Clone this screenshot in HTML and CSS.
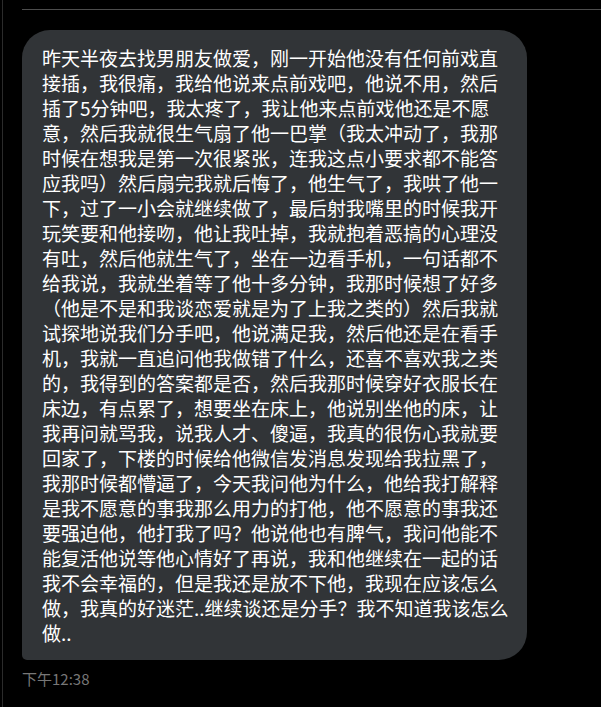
FILE: index.html
```html
<!DOCTYPE html>
<html lang="zh-CN">
<head>
<meta charset="utf-8">
<link rel="stylesheet" href="styles.css">
</head>
<body>
<div class="frame">
  <div class="divider"></div>
  <div class="message">
    <div class="bubble">昨天半夜去找男朋友做爱，刚一开始他没有任何前戏直接插，我很痛，我给他说来点前戏吧，他说不用，然后插了5分钟吧，我太疼了，我让他来点前戏他还是不愿意，然后我就很生气扇了他一巴掌（我太冲动了，我那时候在想我是第一次很紧张，连我这点小要求都不能答应我吗）然后扇完我就后悔了，他生气了，我哄了他一下，过了一小会就继续做了，最后射我嘴里的时候我开玩笑要和他接吻，他让我吐掉，我就抱着恶搞的心理没有吐，然后他就生气了，坐在一边看手机，一句话都不给我说，我就坐着等了他十多分钟，我那时候想了好多（他是不是和我谈恋爱就是为了上我之类的）然后我就试探地说我们分手吧，他说满足我，然后他还是在看手机，我就一直追问他我做错了什么，还喜不喜欢我之类的，我得到的答案都是否，然后我那时候穿好衣服长在床边，有点累了，想要坐在床上，他说别坐他的床，让我再问就骂我，说我人才、傻逼，我真的很伤心我就要回家了，下楼的时候给他微信发消息发现给我拉黑了，我那时候都懵逼了，今天我问他为什么，他给我打解释是我不愿意的事我那么用力的打他，他不愿意的事我还要强迫他，他打我了吗？他说他也有脾气，我问他能不能复活他说等他心情好了再说，我和他继续在一起的话我不会幸福的，但是我还是放不下他，我现在应该怎么做，我真的好迷茫..继续谈还是分手？我不知道我该怎么做..</div>
    <div class="time">下午12:38</div>
  </div>
</div>
</body>
</html>
```

FILE: styles.css
```css
html, body {
  margin: 0;
  padding: 0;
  background: #000;
}
body {
  width: 601px;
  height: 707px;
  overflow: hidden;
  font-family: "Noto Sans CJK SC", "Noto Sans", sans-serif;
}
.frame {
  margin-left: 2px;
  border-left: 1px solid #2b2b2b;
  height: 707px;
  box-sizing: border-box;
  padding-top: 9px;
}
.divider {
  margin-left: 19px;
  height: 1px;
  background: #4d4d4d;
}
.message {
  margin-left: 19px;
  margin-top: 20px;
}
.bubble {
  width: 468px;
  padding: 15px 17px 15px 20px;
  background: #313437;
  color: #ffffff;
  border-radius: 28px 28px 28px 5px;
  font-size: 19px;
  line-height: 25px;
  line-break: strict;
}
.time {
  margin-top: 10px;
  color: #777777;
  font-size: 15px;
  line-height: 18px;
}
```
